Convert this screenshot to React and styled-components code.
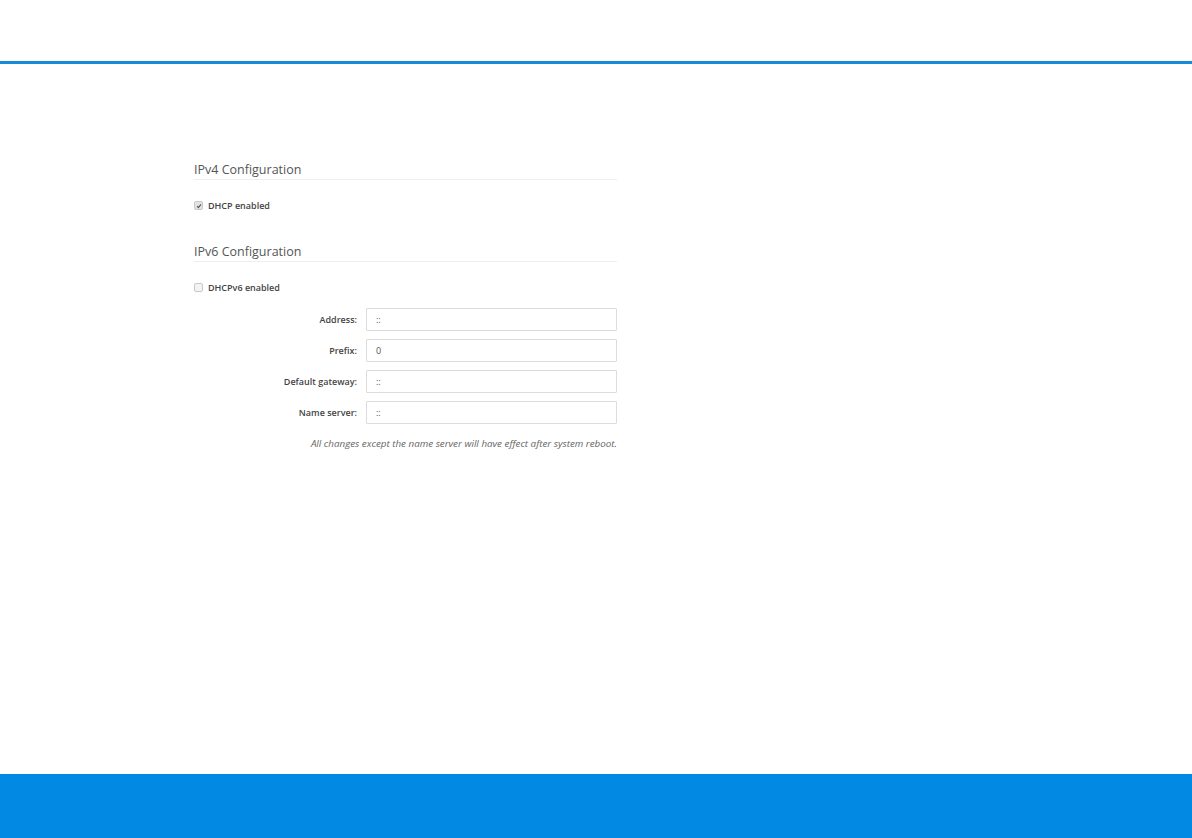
import React from "react";
import styled, { createGlobalStyle } from "styled-components";

const GlobalStyle = createGlobalStyle`
    html, body {
        margin: 0;
        padding: 0;
        background: #fff;
        font-family: "Open Sans", "Noto Sans", sans-serif;
    }
`

const Page = styled.div`
    display: flex;
    flex-direction: column;
    height: 100vh;
`

const TopBar = styled.header`
    height: 61px;
    flex-shrink: 0;
    border-bottom: 3px solid #168bd8;
    background: #fff;
`

const Main = styled.main`
    flex: 1;
    padding: 97px 0 0 194px;
`

const Footer = styled.footer`
    height: 64px;
    flex-shrink: 0;
    background: #0189e3;
`

const Section = styled.section`
    width: 423px;
    margin-bottom: ${(p) => p.$gap || 0}px;
`

const Heading = styled.h3`
    margin: 0;
    padding: 0 0 1px;
    font-size: 12.5px;
    font-weight: 400;
    line-height: 17px;
    color: #555;
    border-bottom: 1px solid #eeeeee;
`

const CheckRow = styled.label`
    display: flex;
    align-items: center;
    gap: 5px;
    height: 13px;
    margin-top: 19px;
    font-size: 9px;
    font-weight: 600;
    color: #444;
`

const Box = styled.span`
    width: 7px;
    height: 7px;
    border: 1px solid #c8c8c8;
    border-radius: 2px;
    background: ${(p) => (p.$checked ? "#e4e4e4" : "#f3f3f3")};
    display: flex;
    align-items: center;
    justify-content: center;
`

const Fields = styled.div`
    display: flex;
    flex-direction: column;
    gap: 8px;
    margin-top: 14px;
`

const FieldRow = styled.div`
    display: grid;
    grid-template-columns: 163px 251px;
    column-gap: 9px;
    align-items: center;
`

const FieldLabel = styled.label`
    text-align: right;
    font-size: 9px;
    font-weight: 600;
    color: #444;
`

const Input = styled.input`
    box-sizing: border-box;
    height: 23px;
    width: 100%;
    margin: 0;
    padding: 0 9px;
    border: 1px solid #dcdcdc;
    border-radius: 1px;
    font-family: "Open Sans", "Noto Sans", sans-serif;
    font-size: 9px;
    color: #555;
    outline: none;
`

const Note = styled.p`
    margin: 13px 0 0;
    text-align: right;
    font-size: 9.8px;
    line-height: 13px;
    font-style: italic;
    color: #666;
`

function Checkbox({ checked, children }) {
    return (
        <CheckRow>
            <Box $checked={checked}>
                {checked && (
                    <svg width="6" height="6" viewBox="0 0 6 6">
                        <path d="M1 3.2 L2.4 4.6 L5 1.4" fill="none" stroke="#555" strokeWidth="1.1" />
                    </svg>
                )}
            </Box>
            {children}
        </CheckRow>
    )
}

const fields = [
    { label: "Address:", value: "::" },
    { label: "Prefix:", value: "0" },
    { label: "Default gateway:", value: "::" },
    { label: "Name server:", value: "::" },
]

export default function App() {
    return (
        <>
            <GlobalStyle />
            <Page>
                <TopBar />
                <Main>
                    <Section $gap={31}>
                        <Heading>IPv4 Configuration</Heading>
                        <Checkbox checked>DHCP enabled</Checkbox>
                    </Section>
                    <Section>
                        <Heading>IPv6 Configuration</Heading>
                        <Checkbox>DHCPv6 enabled</Checkbox>
                        <Fields>
                            {fields.map((f) => (
                                <FieldRow key={f.label}>
                                    <FieldLabel>{f.label}</FieldLabel>
                                    <Input defaultValue={f.value} readOnly />
                                </FieldRow>
                            ))}
                        </Fields>
                        <Note>All changes except the name server will have effect after system reboot.</Note>
                    </Section>
                </Main>
                <Footer />
            </Page>
        </>
    )
}
